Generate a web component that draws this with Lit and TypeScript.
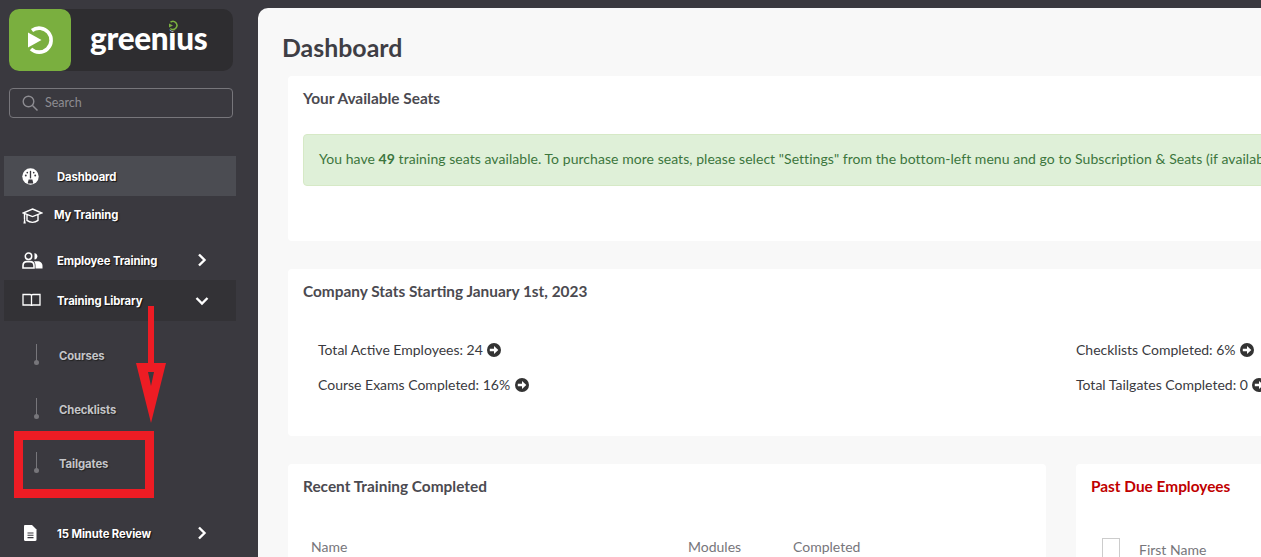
import { LitElement, html, css, svg } from "lit";
import { customElement } from "lit/decorators.js";

const chevR = svg`<svg class="chev" width="12" height="16" viewBox="0 0 12 16"><path d="M3 2.500 8.500 8 3 13.500" fill="none" stroke="#fff" stroke-width="2.400"/></svg>`;
const chevD = svg`<svg class="chevd" width="16" height="12" viewBox="0 0 16 12"><path d="M2.500 3 8 8.500 13.500 3" fill="none" stroke="#fff" stroke-width="2.400"/></svg>`;
const icons: Record<string, unknown> = {
  gauge: svg`<svg width="17" height="17" viewBox="0 0 18 18"><circle cx="9" cy="9" r="8.700" fill="#fff"/><path d="M9 3v8" stroke="#3a393f" stroke-width="1.400"/><path d="M6 16.500h6l-1-4.300H7z" fill="#3a393f"/><circle cx="4" cy="8" r="1" fill="#3a393f"/><circle cx="14" cy="8" r="1" fill="#3a393f"/><circle cx="5.600" cy="4.800" r=".9" fill="#3a393f"/><circle cx="12.400" cy="4.800" r=".9" fill="#3a393f"/></svg>`,
  cap: svg`<svg width="21" height="16" viewBox="0 0 21 16"><path d="M10.500 1 20 5l-9.500 3.600L1 5z M5 7v5.400c3 2.600 8 2.600 11 0V7 M2.500 6v5.500" fill="none" stroke="#fff" stroke-width="1.400"/><path d="M1.400 15.500h2.400l-.9-4.400h-.7z" fill="#fff"/></svg>`,
  people: svg`<svg width="21" height="17" viewBox="0 0 21 17"><circle cx="6.500" cy="4.200" r="3.200" fill="none" stroke="#fff" stroke-width="1.500"/><path d="M12.500.9a3.400 3.400 0 0 1 0 6.700z" fill="#fff"/><path d="M1 16v-2.200C1 11 3 9.600 5 9.600h3c2.400 0 4 1.600 4 4.200V16z" fill="none" stroke="#fff" stroke-width="1.600"/><path d="M13 9.300h2.500c3 0 5 2 5 4.500V16.500h-7v-3c0-1.500-.5-3-1.500-4z" fill="#fff"/></svg>`,
  book: svg`<svg width="19" height="15" viewBox="0 0 19 15"><path d="M1 1.500h7.200c.8 0 1.300.5 1.300 1.200v10.300c0-.6-.5-1-1.300-1H1z M18 1.500h-7.200c-.8 0-1.300.5-1.300 1.200v10.300c0-.6.5-1 1.300-1H18z" fill="none" stroke="#fff" stroke-width="1.300"/></svg>`,
  doc: svg`<svg class="doc" width="13" height="16" viewBox="0 0 13 16"><path d="M1.200 0H8l4.500 4.500v10.300c0 .7-.5 1.200-1.200 1.200H1.200C.5 16 0 15.500 0 14.800V1.200C0 .5.500 0 1.200 0z" fill="#fff"/><path d="M3.500 8h6M3.500 10.300h6M3.500 12.600h6" stroke="#3a393f" stroke-width="1.100"/></svg>`,
};
const go = svg`<svg class="go" width="14" height="14" viewBox="0 0 14 14"><circle cx="7" cy="7" r="7" fill="#333"/><path d="M2.800 5.700h4.200V2.900L11.300 7 7 11.100V8.300H2.800z" fill="#fff"/></svg>`;

@customElement("app-root")
export class AppRoot extends LitElement {
  static styles = css`
    :host { display: block; width: 1261px; height: 557px; overflow: hidden; position: relative; background: #3a393f; font-family: "Lato", "Liberation Sans", sans-serif; }
    .page { display: flex; height: 557px; }
    .side { width: 258px; flex: none; box-sizing: border-box; padding: 9px 0 0 0; }
    .brand { margin: 0 25px 0 9px; height: 62px; border-radius: 10px; background: #2e2d30; display: flex; align-items: center; }
    .mark { width: 62px; height: 62px; border-radius: 10px; background: #7aaf3f; display: flex; align-items: center; justify-content: center; }
    .word { position: relative; margin-left: 19px; margin-top: -2px; color: #fff; font: 900 31.500px/1 "Lato", sans-serif; letter-spacing: -.3px; }
    .ring { position: absolute; left: 78px; top: -3px; background: #2e2d30; border-radius: 50%; display: block; }
    .search { margin: 17px 25px 0 9px; height: 30px; box-sizing: border-box; border: 1px solid #77767b; border-radius: 4px; display: flex; align-items: center; padding-left: 12px; gap: 7px; color: #8d8c91; font-size: 12.500px; line-height: 12px; }
    .nav { margin-top: 38px; display: flex; flex-direction: column; width: 232px; margin-left: 4px; }
    .row { display: flex; align-items: center; height: 40px; color: #fff; font: 700 11.300px/1 "Inter", sans-serif; text-shadow: 1px 1px 1px #111; letter-spacing: -.1px; position: relative; }
    .row .ic { width: 53px; flex: none; display: flex; justify-content: flex-start; padding-left: 18px; box-sizing: border-box; }
    .row .lbl { flex: 1; padding-top: 3px; }
    .chev { position: absolute; left: 192px; }
    .chevd { position: absolute; left: 190px; }
    .doc { margin-left: 2px; }
    .active { background: #4b4c52; }
    .training { height: 39px; margin-bottom: 5px; box-sizing: border-box; }
    .training .lbl { margin-left: -3px; padding-top: 0; }
    .open { background: #333236; height: 41px; }
    .subs { display: flex; flex-direction: column; padding-top: 9px; }
    .sub { height: 54px; display: flex; align-items: center; padding-left: 30px; gap: 20px; color: #c4c5c9; font: 700 11.300px/1 "Inter", sans-serif; text-shadow: 1px 1px 1px #222; letter-spacing: -.1px; }
    .tick { width: 5px; height: 21px; flex: none; position: relative; margin-top: -6px; }
    .tick::before { content: ""; position: absolute; left: 2px; top: 0; width: 1px; height: 18px; background: #77767b; }
    .tick::after { content: ""; position: absolute; left: 0; bottom: 0; width: 5px; height: 5px; border-radius: 50%; background: #77767b; }
    .review { margin-top: 21px; }
    .main { flex: 1; margin-top: 8px; background: #f8f8f8; border-top-left-radius: 10px; box-sizing: border-box; padding: 0 0 0 30px; min-width: 0; overflow: hidden; }
    h1 { margin: 0 0 0 -6px; padding-top: 25px; padding-bottom: 14px; height: 29px; font: 700 24.900px/29px "Lato", sans-serif; color: #3f3e45; }
    .card { background: #fff; border-radius: 4px; box-sizing: border-box; padding: 14px 15px 15px; flex: none; }
    .card h2 { margin: 0; font: 700 15.400px/17px "Lato", sans-serif; color: #4b4a50; }
    .wide { width: 1100px; margin-bottom: 28px; }
    .seats { height: 165px; }
    .alert { margin-top: 27px; height: 52px; box-sizing: border-box; width: 1000px; border: 1px solid #d6e9c6; background: #dff0d8; color: #3c763d; border-radius: 4px; padding: 0 15px 3px; display: flex; align-items: center; font-size: 14px; letter-spacing: .05px; white-space: pre; }
    .stats { height: 167px; }
    .grid { margin-top: 39px; display: grid; grid-template-columns: 758px 1fr; row-gap: 14px; padding-left: 15px; }
    .stat { height: 21px; display: flex; align-items: center; gap: 1px; font-size: 14px; color: #3a3a40; white-space: pre; }
    .cols { display: flex; gap: 30px; width: 1100px; }
    .recent { width: 758px; height: 200px; }
    .due { width: 400px; height: 200px; }
    .due h2 { color: #c00000; }
    .th { margin-top: 43px; display: flex; font-size: 14px; color: #77767b; padding-left: 8px; line-height: 17px; }
    .th span:nth-child(1) { width: 377px; }
    .th span:nth-child(2) { width: 105px; }
    .due .th { margin-top: 43px; padding-left: 11px; align-items: flex-start; }
    .check { width: 18px; height: 20px; border: 1px solid #ccc; box-sizing: border-box; margin-right: 19px; flex: none; }
    .due .th span { width: auto !important; padding-top: 3px; white-space: nowrap; }
    .overlay { position: absolute; left: 0; top: 0; pointer-events: none; }
  `;

  row(icon: string, label: string, extra = "", tail: unknown = null) {
    return html`<div class="row ${extra}"><span class="ic">${icons[icon]}</span><span class="lbl">${label}</span>${tail}</div>`;
  }

  render() {
    return html`
      <div class="page">
        <aside class="side">
          <div class="brand">
            <div class="mark">
              <svg width="28" height="30" viewBox="0 0 28 30"><path d="M6 5.500A12 12 0 1 1 5 24" fill="none" stroke="#fff" stroke-width="3.600"/><path d="M2 7.500 15.500 15 2 22.500z" fill="#fff"/></svg>
            </div>
            <div class="word">greenius<svg class="ring" width="10" height="11" viewBox="0 0 10 11"><path d="M2.500 2.200a4 4 0 1 1-.2 6.300" fill="none" stroke="#7aaf3f" stroke-width="1.600"/><path d="M1 3.500 5 5.500 1 7.500z" fill="#7aaf3f"/></svg></div>
          </div>
          <div class="search">
            <svg width="16" height="16" viewBox="0 0 16 16"><circle cx="6.500" cy="6.500" r="5.300" fill="none" stroke="#8d8c91" stroke-width="1.400"/><path d="m10.500 10.500 5 5" stroke="#8d8c91" stroke-width="1.500"/></svg>
            <span>Search</span>
          </div>
          <nav class="nav">
            ${this.row("gauge", "Dashboard", "active")}
            ${this.row("cap", "My Training", "training")}
            ${this.row("people", "Employee Training", "", chevR)}
            ${this.row("book", "Training Library", "open", chevD)}
            <div class="subs">
              <div class="sub"><span class="tick"></span>Courses</div>
              <div class="sub"><span class="tick"></span>Checklists</div>
              <div class="sub"><span class="tick"></span>Tailgates</div>
            </div>
            <div class="review">${this.row("doc", "15 Minute Review", "", chevR)}</div>
          </nav>
        </aside>
        <main class="main">
          <h1>Dashboard</h1>
          <section class="card wide seats">
            <h2>Your Available Seats</h2>
            <div class="alert"><span>You have <b>49</b> training seats available. To purchase more seats, please select "Settings" from the bottom-left menu and go to Subscription &amp; Seats (if available).</span></div>
          </section>
          <section class="card wide stats">
            <h2>Company Stats Starting January 1st, 2023</h2>
            <div class="grid">
              <div class="stat">Total Active Employees: 24 ${go}</div>
              <div class="stat">Checklists Completed: 6% ${go}</div>
              <div class="stat">Course Exams Completed: 16% ${go}</div>
              <div class="stat">Total Tailgates Completed: 0 ${go}</div>
            </div>
          </section>
          <div class="cols">
            <section class="card recent">
              <h2>Recent Training Completed</h2>
              <div class="th"><span>Name</span><span>Modules</span><span>Completed</span></div>
            </section>
            <section class="card due">
              <h2>Past Due Employees</h2>
              <div class="th"><div class="check"></div><span>First Name</span></div>
            </section>
          </div>
        </main>
      </div>
      <svg class="overlay" width="1261" height="557" viewBox="0 0 1261 557">
        <path d="M148 306h6v57h12l-15 60-15-60h12z M148 372l3 14 3-14z" fill="#ed1c24" fill-rule="evenodd"/>
        <rect x="18.500" y="435.500" width="131" height="58" fill="none" stroke="#ed1c24" stroke-width="9"/>
      </svg>
    `;
  }
}
